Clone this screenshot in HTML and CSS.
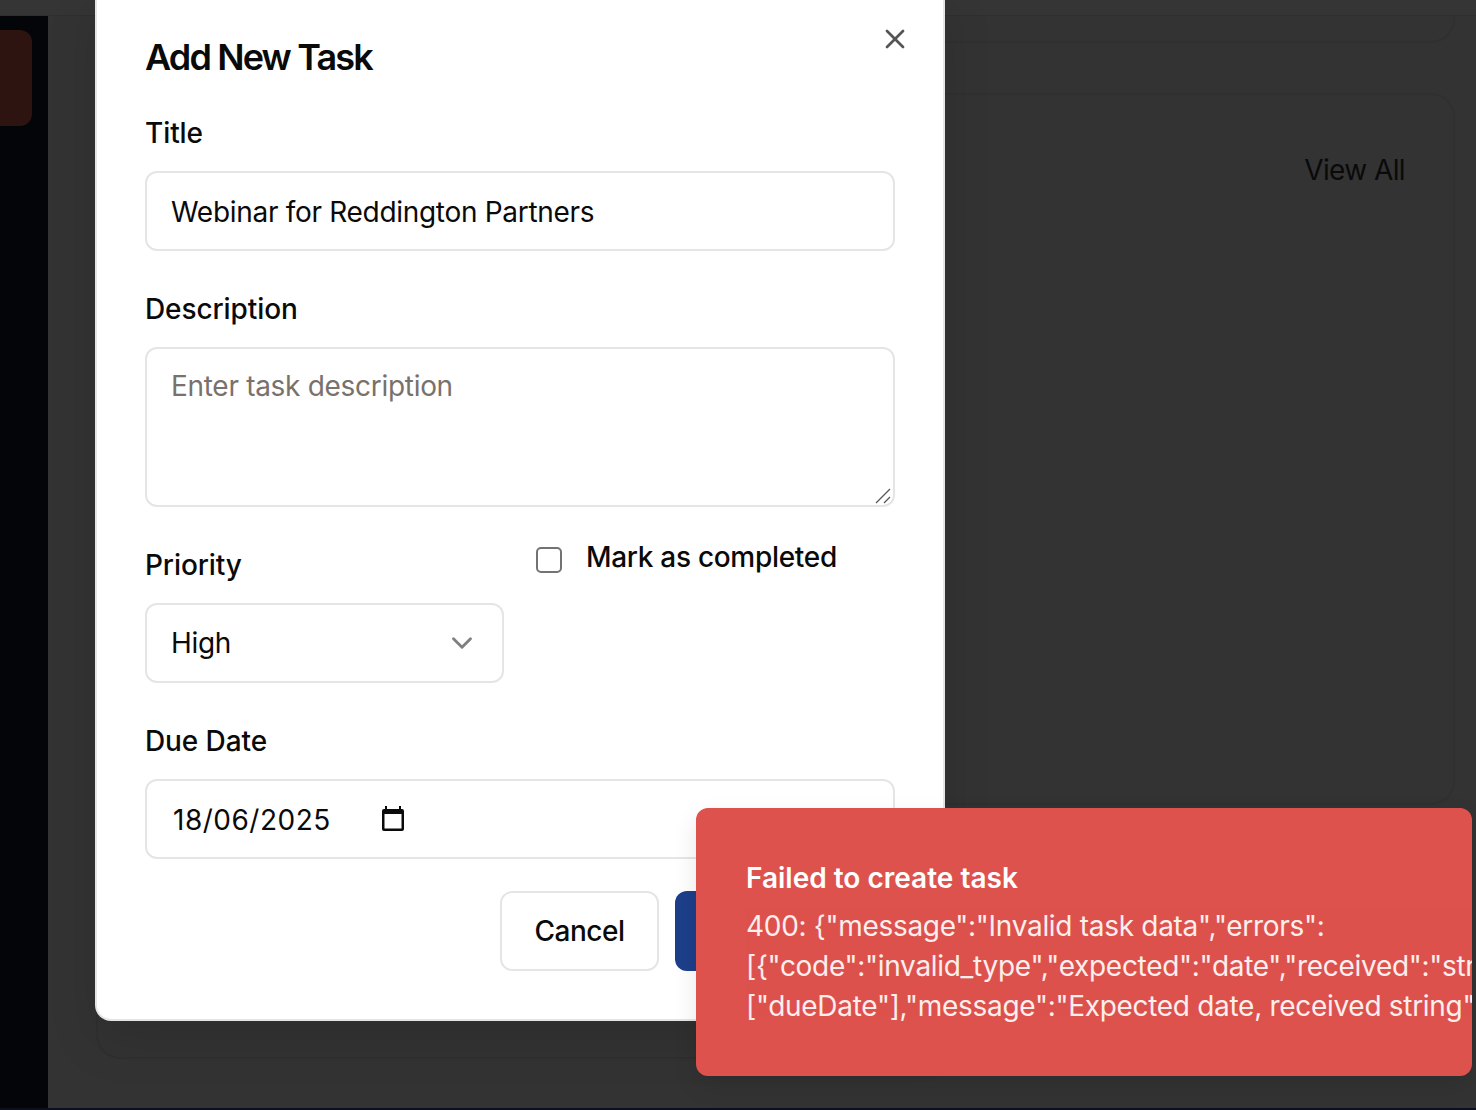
FILE: index.html
```html
<!DOCTYPE html>
<html>
<head>
	<title>Add New Task</title>
	<link rel="stylesheet" href="styles.css">
</head>
<body>
	<div class="page">
		<div class="top-bar"></div>
		<div class="main">
			<div class="sidebar">
				<div class="nav-active"></div>
			</div>
			<div class="content">
				<div class="card card-first"></div>
				<div class="card card-tasks">
					<div class="card-header">
						<span class="view-all">View All</span>
					</div>
				</div>
				<div class="card card-last"></div>
			</div>
		</div>

		<form class="modal">
			<h2 class="modal-title">Add New Task</h2>
			<button type="button" class="close-btn" aria-label="Close">
				<svg width="32" height="32" viewBox="0 0 24 24" fill="none" stroke="currentColor" stroke-width="2" stroke-linecap="round" stroke-linejoin="round"><path d="M18 6 6 18"/><path d="m6 6 12 12"/></svg>
			</button>

			<div class="field">
				<label class="field-label">Title</label>
				<input class="control" type="text" value="Webinar for Reddington Partners">
			</div>

			<div class="field">
				<label class="field-label">Description</label>
				<div class="textarea-wrap">
					<textarea class="control control-area" placeholder="Enter task description"></textarea>
					<svg class="grip" width="18" height="18" viewBox="0 0 18 18" fill="none" stroke="#555" stroke-width="1.2"><path d="M2 16 16 2"/><path d="M10 16 16 10"/></svg>
				</div>
			</div>

			<div class="field-row">
				<div class="field">
					<label class="field-label">Priority</label>
					<div class="control control-select">
						<span>High</span>
						<svg width="34" height="34" viewBox="0 0 24 24" fill="none" stroke="#808080" stroke-width="2" stroke-linecap="round" stroke-linejoin="round"><path d="m6 9 6 6 6-6"/></svg>
					</div>
				</div>
				<label class="check-row">
					<span class="check-box"></span>
					<span>Mark as completed</span>
				</label>
			</div>

			<div class="field">
				<label class="field-label">Due Date</label>
				<div class="control control-date">
					<span class="date-value">18/06/2025</span>
					<svg class="date-icon" width="22" height="25" viewBox="0 0 22 25"><path fill="#0a0a0a" d="M3 0h2v3h12V0h2v3h1a2 2 0 0 1 2 2v18a2 2 0 0 1-2 2H2a2 2 0 0 1-2-2V5a2 2 0 0 1 2-2h1z"/><rect x="2.500" y="8" width="17" height="14.500" fill="#fff"/></svg>
				</div>
			</div>

			<div class="modal-actions">
				<button type="button" class="btn btn-outline">Cancel</button>
				<button type="button" class="btn btn-primary">Create Task</button>
			</div>
		</form>

		<div class="toast">
			<div class="toast-title">Failed to create task</div>
			<div class="toast-body">400: {"message":"Invalid task data","errors":<br>[{"code":"invalid_type","expected":"date","received":"string","path":<br>["dueDate"],"message":"Expected date, received string"}]}</div>
		</div>
	</div>
</body>
</html>
```

FILE: styles.css
```css
* {
	box-sizing: border-box;
}

body {
	margin: 0;
	background-color: #0b0f1e;
	font-family: Inter, "Liberation Sans", sans-serif;
	color: #0a0a0a;
}

.page {
	position: relative;
	width: 1476px;
	height: 1108px;
	overflow: hidden;
	background-color: #333;
}

.top-bar {
	height: 16px;
	background-color: #353535;
	border-bottom: 1px solid #2f2f2f;
}

.main {
	display: flex;
	height: 1092px;
}

.sidebar {
	width: 48px;
	flex-shrink: 0;
	padding-top: 14px;
	background-color: #030509;
}

.nav-active {
	width: 32px;
	height: 96px;
	background-color: #2d1410;
	border-radius: 0 12px 12px 0;
}

.content {
	flex: 1;
	display: flex;
	flex-direction: column;
	gap: 50px;
	padding: 0 21px 49px 48px;
}

.card {
	border: 2px solid #303030;
	border-radius: 24px;
}

.card-first {
	height: 27px;
	border-top: 0;
	border-radius: 0 0 24px 24px;
}

.card-tasks {
	height: 712px;
	padding: 55px 48px;
}

.card-last {
	flex: 1;
}

.card-header {
	display: flex;
	justify-content: flex-end;
}

.view-all {
	font-size: 28px;
	line-height: 40px;
	letter-spacing: -0.6px;
}

/* modal */
.modal {
	position: absolute;
	left: 95px;
	bottom: 87px;
	width: 850px;
	display: flex;
	flex-direction: column;
	gap: 38px;
	padding: 50px 48px 48px;
	background-color: #fff;
	border: 2px solid #e5e5e5;
	border-top: 0;
	border-radius: 16px;
	box-shadow: 0 20px 50px rgba(0, 0, 0, 0.12);
}

.modal-title {
	margin: 0 0 -6px;
	font-size: 36px;
	line-height: 48px;
	font-weight: 600;
	letter-spacing: -1.85px;
}

.close-btn {
	position: absolute;
	top: 40px;
	right: 32px;
	display: flex;
	padding: 0;
	border: 0;
	background: none;
	color: #555;
}

.field {
	display: flex;
	flex-direction: column;
	gap: 18px;
}

.field-label {
	font-size: 28px;
	line-height: 40px;
	font-weight: 500;
	letter-spacing: -0.1px;
}

.control {
	width: 100%;
	height: 80px;
	padding: 2px 24px 0;
	border: 2px solid #e5e5e5;
	border-radius: 12px;
	background-color: #fff;
	font-family: inherit;
	font-size: 28px;
	letter-spacing: -0.3px;
	color: #0a0a0a;
	outline: none;
}

.textarea-wrap {
	position: relative;
	display: flex;
}

.control-area {
	height: 160px;
	padding: 17px 24px;
	line-height: 40px;
	resize: none;
}

.control-area::placeholder {
	color: #78716c;
}

.grip {
	position: absolute;
	right: 3px;
	bottom: 2px;
}

.field-row {
	display: grid;
	grid-template-columns: 359px 359px;
	gap: 32px;
}

.control-select {
	display: flex;
	align-items: center;
	justify-content: space-between;
	padding: 0 23px 0 24px;
}

.check-row {
	display: flex;
	align-items: center;
	align-self: flex-start;
	gap: 24px;
	margin-top: -8px;
	font-size: 28px;
	line-height: 40px;
	font-weight: 500;
	letter-spacing: -0.3px;
}

.check-box {
	width: 26px;
	height: 26px;
	margin-top: 5px;
	border: 2px solid #737373;
	border-radius: 5px;
}

.control-date {
	display: flex;
	align-items: center;
	gap: 51px;
	padding: 2px 24px 0 26px;
}

.date-value {
	letter-spacing: 0.5px;
}

.date-icon {
	margin-top: -4px;
}

.modal-actions {
	display: flex;
	justify-content: flex-end;
	gap: 16px;
	margin-top: -6px;
}

.btn {
	height: 80px;
	padding: 0 32.5px;
	border-radius: 12px;
	font-family: inherit;
	font-size: 28px;
	font-weight: 500;
	letter-spacing: -0.5px;
}

.btn-outline {
	background-color: #fff;
	border: 2px solid #e5e5e5;
	color: #0a0a0a;
}

.btn-primary {
	width: 220px;
	background-color: #1d3f8a;
	border: 0;
	color: #fff;
}

/* toast */
.toast {
	position: absolute;
	left: 696px;
	top: 808px;
	width: 776px;
	height: 268px;
	padding: 50px;
	overflow: hidden;
	background-color: #dd524d;
	border-radius: 12px;
	box-shadow: 0 10px 25px rgba(0, 0, 0, 0.1);
	color: #fff;
	white-space: nowrap;
}

.toast-title {
	font-size: 28px;
	line-height: 40px;
	font-weight: 600;
	margin-bottom: 8px;
}

.toast-body {
	font-size: 28px;
	line-height: 40px;
	letter-spacing: -0.3px;
	opacity: 0.9;
}
```
